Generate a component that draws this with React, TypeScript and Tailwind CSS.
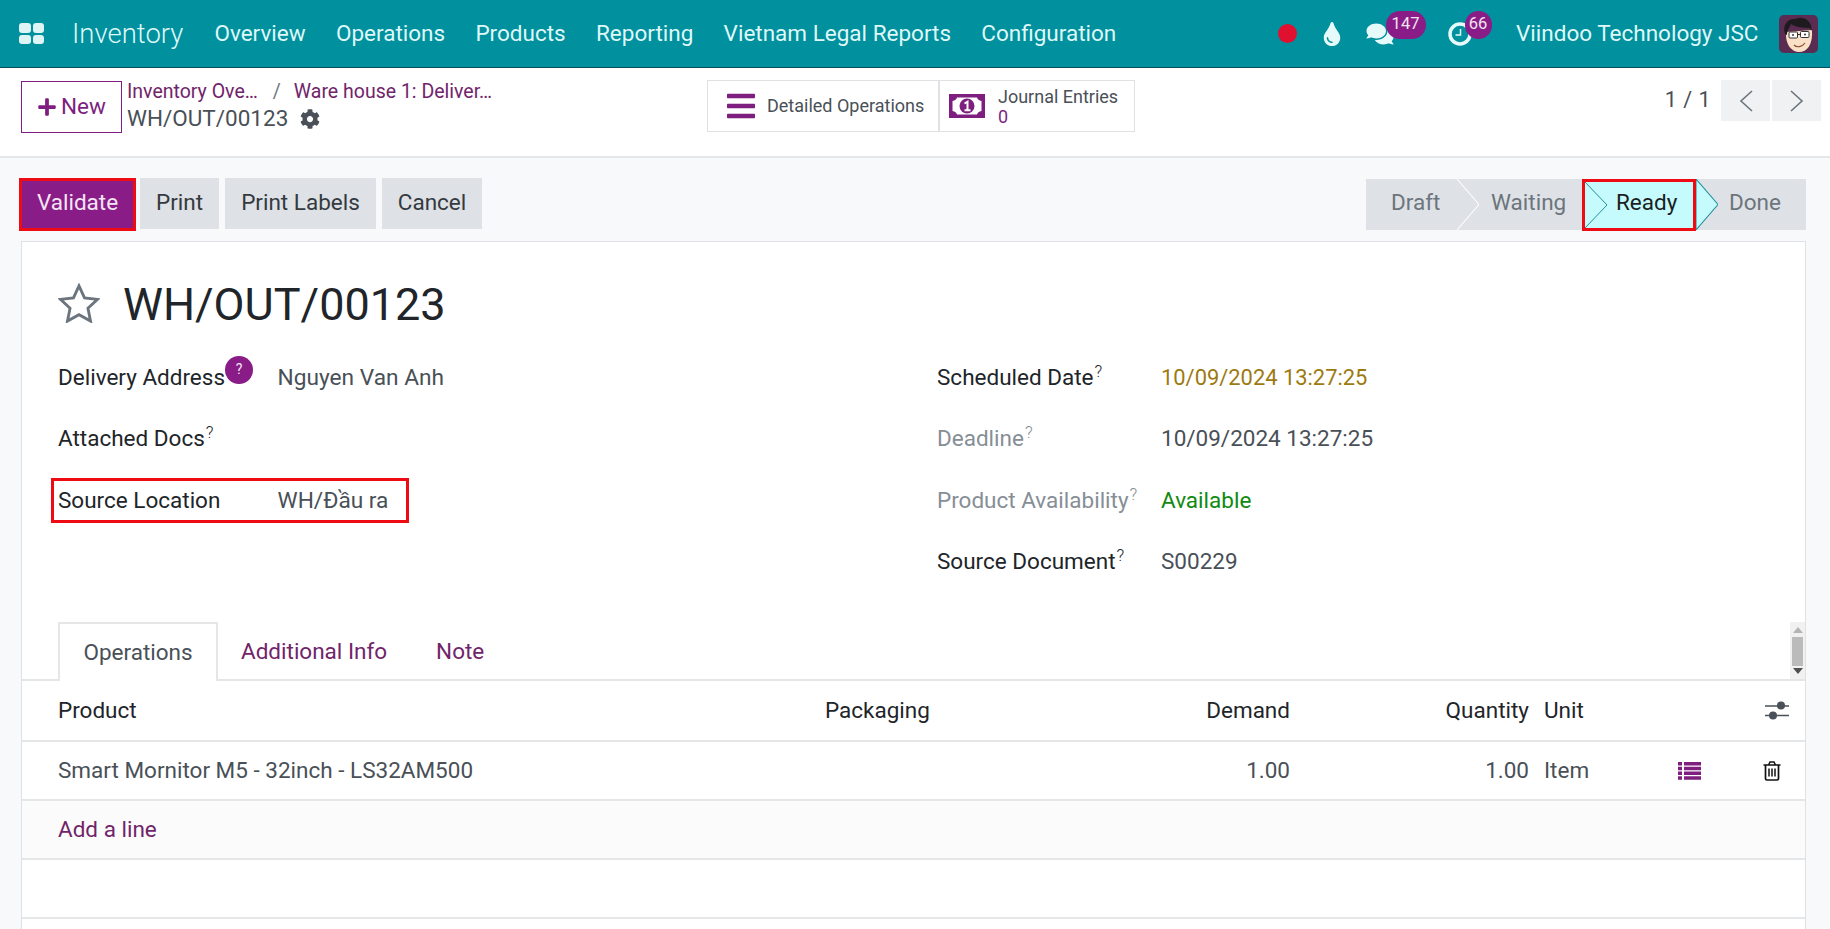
import React from "react";
import { FaBars, FaCog, FaComments, FaPlus, FaTint } from "react-icons/fa";

function Sup() {
  return <sup className="text-[17px] ml-[1px] font-light relative -top-[8px]">?</sup>;
}

function Field({ label, value, labelClass, valueClass, w, help }: { label: string; value?: string; labelClass?: string; valueClass?: string; w: string; help?: boolean }) {
  return (
    <div className="h-[61.500px] flex items-center">
      <div className={w + " " + (labelClass || "text-[#212529]")}>
        {label}
        {help && <Sup />}
      </div>
      <div className={valueClass || "text-[#495057]"}>{value}</div>
    </div>
  );
}

function Chevron({ stroke, className }: { stroke: string; className: string }) {
  return (
    <svg viewBox="0 0 22 50" preserveAspectRatio="none" className={"absolute top-0 h-full w-[22px] " + className}>
      <path d="M0 0 L22 25 L0 50" fill="none" stroke={stroke} strokeWidth="1" />
    </svg>
  );
}

function MoneyIcon() {
  return (
    <svg viewBox="0 0 36 24" className="w-[36px] h-[24px]">
      <path fillRule="evenodd" fill="#7e1f7f" d="M0 0H36V24H0Z M8 3.500 C7.500 5.500 6 6.500 3.500 7 V17 C6 17.500 7.500 18.500 8 20.500 H28 C28.500 18.500 30 17.500 32.500 17 V7 C30 6.500 28.500 5.500 28 3.500Z" />
      <circle cx="18" cy="12" r="7.500" fill="#7e1f7f" />
      <path d="M15.500 9.500 L18.500 7.800 V16 M15.500 16.300 H21.500" stroke="#fff" strokeWidth="2" fill="none" />
    </svg>
  );
}

function Sliders() {
  return (
    <svg viewBox="0 0 24 20" className="w-[24px] h-[20px]">
      <path d="M0 5H24 M0 14.500H24" stroke="#495057" strokeWidth="1.500" />
      <circle cx="16" cy="4.500" r="4" fill="#495057" />
      <circle cx="8" cy="14.500" r="4" fill="#495057" />
    </svg>
  );
}

function ListIcon() {
  return (
    <svg viewBox="0 0 23 18" className="w-[23px] h-[18px]">
      <path fill="#7e1f7f" d="M0 0H4V3.500H0Z M6 0H23V3.500H6Z M0 4.700H4V8.200H0Z M6 4.700H23V8.200H6Z M0 9.500H4V13H0Z M6 9.500H23V13H6Z M0 14.300H4V17.800H0Z M6 14.300H23V17.800H6Z" />
    </svg>
  );
}

function TrashIcon() {
  return (
    <svg viewBox="0 0 18 20" className="w-[18px] h-[20px]">
      <path d="M0.500 4H17.500 M5.500 4 L7 1H11 L12.500 4" fill="none" stroke="#111" strokeWidth="1.500" />
      <path d="M2.500 4 V17.500 C2.500 18.500 3 19 4 19 H14 C15 19 15.500 18.500 15.500 17.500 V4" fill="none" stroke="#111" strokeWidth="1.700" />
      <path d="M6 7.500V15.500 M9 7.500V15.500 M12 7.500V15.500" stroke="#111" strokeWidth="1.500" />
    </svg>
  );
}

function StarIcon() {
  return (
    <svg viewBox="0 0 44 42" className="w-[42px] h-[40px]">
      <path d="M22 3 L27.800 15.600 L41.500 17.200 L31.400 26.500 L34.100 40 L22 33.300 L9.900 40 L12.600 26.500 L2.500 17.200 L16.200 15.600 Z" fill="none" stroke="#6c757d" strokeWidth="3" />
    </svg>
  );
}

function Avatar() {
  return (
    <svg viewBox="0 0 39 38" className="w-[39px] h-[38px]">
      <rect width="39" height="38" rx="5" fill="#5a2c52" />
      <path d="M7 17 C6 30 13 37 20 37 C28 37 34 30 33 15 Z" fill="#fae0c6" />
      <path d="M6 19 C3 10 9 3 16 4 C23 1 32 3 33 16 L31 13 C24 13 16 12 12 9 C11 12 8 15 8 20Z" fill="#1d1b1e" />
      <rect x="10" y="17" width="8.500" height="6" rx="1" fill="#fff" stroke="#333" strokeWidth="1" />
      <rect x="21.500" y="16.500" width="8.500" height="6" rx="1" fill="#fff" stroke="#333" strokeWidth="1" />
      <path d="M18.500 19.500H21.500" stroke="#333" strokeWidth="1" />
      <circle cx="14" cy="20" r="1" fill="#333" />
      <circle cx="26" cy="19.500" r="1" fill="#333" />
      <path d="M15 30 C18 33 23 32 26 28" fill="none" stroke="#8a4a32" strokeWidth="1.200" />
    </svg>
  );
}

const COLS = "grid-cols-[767px_230px_235px_239px_15px_134px_24px_1fr]";

export default function App() {
  return (
    <div className="w-[1830px] h-[929px] overflow-hidden bg-[#f8f9fb] text-[22.500px] text-[#212529] font-['Roboto',sans-serif]">
      {/* top nav */}
      <div className="h-[68px] bg-[#00909e] border-b border-[#05505a] flex items-center text-[#dff8f8]">
        <div className="ml-[19px] w-[25px] h-[21px] grid grid-cols-2 gap-[2px]">
          <span className="bg-[#dff5f5] rounded-[3px]"></span>
          <span className="bg-[#dff5f5] rounded-[3px]"></span>
          <span className="bg-[#dff5f5] rounded-[3px]"></span>
          <span className="bg-[#dff5f5] rounded-[3px]"></span>
        </div>
        <div className="ml-[28px] text-[27.500px] font-light">Inventory</div>
        <div className="ml-[31px] flex gap-[30.300px]">
          <span>Overview</span>
          <span>Operations</span>
          <span>Products</span>
          <span>Reporting</span>
          <span>Vietnam Legal Reports</span>
          <span>Configuration</span>
        </div>
        <div className="ml-auto flex items-center h-full">
          <span className="w-[19px] h-[19px] rounded-full bg-[#e0102f]"></span>
          <FaTint className="ml-[26px] w-[18px] h-[24px] text-[#e6fafa]" />
          <div className="ml-[25px] relative w-[28px] h-[24px]">
            <FaComments className="w-[28px] h-[24px] text-[#e6fafa]" />
            <span className="absolute left-[20px] -top-[11px] w-[40px] h-[28px] rounded-full bg-[#8a1c87] text-[16.500px] text-[#f3e3f3] flex items-center justify-center">147</span>
          </div>
          <div className="ml-[54px] relative w-[24px] h-[24px]">
            <svg viewBox="0 0 24 24" className="w-[24px] h-[24px]">
              <circle cx="12" cy="12" r="10" fill="none" stroke="#e6fafa" strokeWidth="3.500" />
              <path d="M12.500 7V13H7.500" fill="none" stroke="#e6fafa" strokeWidth="1.500" />
            </svg>
            <span className="absolute left-[17px] -top-[11px] w-[27px] h-[28px] rounded-full bg-[#8a1c87] text-[16.500px] text-[#f3e3f3] flex items-center justify-center">66</span>
          </div>
          <span className="ml-[44.500px]">Viindoo Technology JSC</span>
          <div className="ml-[20.500px] mr-[12px]">
            <Avatar />
          </div>
        </div>
      </div>

      {/* control panel */}
      <div className="h-[90px] bg-white border-b-2 border-[#e4e6e8] flex items-start pt-[12px]">
        <div className="ml-[21px] mt-[1px] w-[101px] h-[52px] border border-[#7e1f7f] flex items-center justify-center gap-[4px] text-[#7e1f7f]">
          <FaPlus className="w-[20px] h-[20px]" />
          <span>New</span>
        </div>
        <div className="ml-[5px] w-[571px] leading-[27px] -mt-[2px]">
          <div className="text-[#71246a] text-[19.500px] flex">
            <span>Inventory Ove…</span>
            <span className="ml-[15px] text-[#6c757d]">/</span>
            <span className="ml-[13px]">Ware house 1: Deliver…</span>
          </div>
          <div className="flex items-center text-[#495057]">
            WH/OUT/00123
            <FaCog className="ml-[12px] w-[20px] h-[20px]" />
          </div>
        </div>
        <div className="ml-[9px] h-[52px] w-[428px] border border-[#dfe1e4] flex">
          <div className="w-[232px] flex items-center border-r-2 border-[#dfe1e4] text-[#495057] text-[18px]">
            <FaBars className="ml-[17px] w-[32px] h-[32px] text-[#7e1f7f]" />
            <span className="ml-[10px] -mt-[1px]">Detailed Operations</span>
          </div>
          <div className="flex items-center text-[18px] text-[#495057]">
            <div className="ml-[9px] flex">
              <MoneyIcon />
            </div>
            <div className="ml-[13px] leading-[20px] mt-[2px]">
              <div>Journal Entries</div>
              <div className="text-[#7e1f7f]">0</div>
            </div>
          </div>
        </div>
        <div className="ml-auto flex items-center mr-[9px]">
          <span className="text-[#495057] text-[21.500px] tracking-[0.500px]">1 / 1</span>
          <div className="ml-[10px] w-[49px] h-[41px] bg-[#f0f1f2] flex items-center justify-center">
            <svg viewBox="0 0 14 22" className="w-[14px] h-[22px]">
              <path d="M13 1 L2 11 L13 21" fill="none" stroke="#6c757d" strokeWidth="1.600" />
            </svg>
          </div>
          <div className="ml-[2px] w-[49px] h-[41px] bg-[#f0f1f2] flex items-center justify-center">
            <svg viewBox="0 0 14 22" className="w-[14px] h-[22px]">
              <path d="M1 1 L12 11 L1 21" fill="none" stroke="#6c757d" strokeWidth="1.600" />
            </svg>
          </div>
        </div>
      </div>

      {/* action buttons + status bar */}
      <div className="h-[83px] flex items-start pt-[20px]">
        <div className="ml-[19px] w-[117px] h-[53px] pb-[4px] border-[3px] border-[#ee0b13] bg-[#8a1c87] text-[#f4e6f4] flex items-center justify-center">Validate</div>
        <div className="ml-[4px] w-[79px] h-[51px] pb-[2px] bg-[#dee1e5] text-[#343a40] flex items-center justify-center">Print</div>
        <div className="ml-[6px] w-[151px] h-[51px] pb-[2px] bg-[#dee1e5] text-[#343a40] flex items-center justify-center">Print Labels</div>
        <div className="ml-[6px] w-[100px] h-[51px] pb-[2px] bg-[#dee1e5] text-[#343a40] flex items-center justify-center">Cancel</div>
        <div className="ml-auto mr-[24px] h-[51px] w-[440px] bg-[#dee1e5] flex text-[#6c757d] mt-[1px]">
          <div className="w-[91px] relative pl-[25px] pb-[3px] flex items-center">
            Draft
            <Chevron stroke="#ffffff" className="left-[91px] z-10" />
          </div>
          <div className="w-[125px] relative pl-[34px] pb-[3px] flex items-center">Waiting</div>
          <div className="w-[114px] relative h-[52px] pl-[31px] pb-[5px] flex items-center bg-[#c5fbfd] text-[#1b1f23] border-[3px] border-[#ee0b13]">
            Ready
            <Chevron stroke="#1b8a96" className="left-0 z-10" />
          </div>
          <div className="relative flex-1 pl-[33px] pb-[3px] flex items-center">
            <svg viewBox="0 0 22 50" preserveAspectRatio="none" className="absolute left-0 top-0 h-full w-[22px]">
              <path d="M0 0 L22 25 L0 50Z" fill="#c5fbfd" stroke="#1b8a96" strokeWidth="1" />
            </svg>
            Done
          </div>
        </div>
      </div>

      {/* sheet */}
      <div className="ml-[21px] w-[1785px] h-[700px] bg-white border border-[#dfe1e6]">
        <div className="h-[105px] pl-[36px] flex items-start pt-[33px]">
          <div className="mt-[8px] flex">
            <StarIcon />
          </div>
          <h1 className="ml-[23px] text-[45px] leading-[60px] text-[#212529] font-normal">WH/OUT/00123</h1>
        </div>
        <div className="pl-[36px] flex">
          <div className="w-[879px]">
            <div className="h-[61.500px] flex items-center">
              <div className="w-[219.500px] relative">
                Delivery Address
                <span className="absolute left-[167px] -top-[5px] w-[28px] h-[28px] rounded-full bg-[#8a1c87] text-[#f4e6f4] text-[14px] flex items-center justify-center">?</span>
              </div>
              <div className="text-[#495057] text-[22.700px]">Nguyen Van Anh</div>
            </div>
            <Field label="Attached Docs" w="w-[219.500px]" help />
            <div className="h-[61.500px] flex items-center -ml-[7px]">
              <div className="w-[358px] h-[45px] border-[3px] border-[#ee0b13] flex items-center pl-[4px]">
                <div className="w-[219.500px]">Source Location</div>
                <div className="text-[#495057] text-[22.700px]">WH/Đầu ra</div>
              </div>
            </div>
          </div>
          <div>
            <Field label="Scheduled Date" value="10/09/2024 13:27:25" w="w-[224px]" help valueClass="text-[#9c7a10] text-[21.900px] mt-[1px]" />
            <Field label="Deadline" value="10/09/2024 13:27:25" w="w-[224px]" help labelClass="text-[#868e96]" />
            <Field label="Product Availability" value="Available" w="w-[224px]" help labelClass="text-[#868e96]" valueClass="text-[#108a10]" />
            <Field label="Source Document" value="S00229" w="w-[224px]" help />
          </div>
        </div>

        {/* tabs */}
        <div className="mt-[29px] h-[59px] border-b-2 border-[#e4e6e8] pl-[36px] flex relative">
          <div className="w-[160px] h-[59px] bg-white border-2 border-b-0 border-[#e4e6e8] flex items-center justify-center text-[#495057]">Operations</div>
          <div className="ml-[23px] pt-[2px] flex items-center text-[#71246a]">Additional Info</div>
          <div className="ml-[49px] pt-[2px] flex items-center text-[#71246a]">Note</div>
          <div className="absolute right-0 top-0 w-[15px] h-[57px] bg-[#f1f1f1] flex flex-col items-center justify-between py-[5px]">
            <span className="w-0 h-0 border-x-[5px] border-x-transparent border-b-[6px] border-b-[#b4b4b4]"></span>
            <span className="absolute top-[15px] left-[2px] w-[11px] h-[29px] bg-[#bbbbbb]"></span>
            <span className="w-0 h-0 border-x-[5px] border-x-transparent border-t-[6px] border-t-[#505050]"></span>
          </div>
        </div>

        {/* table */}
        <div className={"h-[61px] border-b-2 border-[#e4e6e8] pl-[36px] grid items-center " + COLS}>
          <span>Product</span>
          <span>Packaging</span>
          <span className="text-right">Demand</span>
          <span className="text-right">Quantity</span>
          <span></span>
          <span>Unit</span>
          <span></span>
          <div className="justify-self-end mr-[16px] flex">
            <Sliders />
          </div>
        </div>
        <div className={"h-[59px] border-b-2 border-[#e4e6e8] pl-[36px] grid items-center text-[#495057] " + COLS}>
          <span>Smart Mornitor M5 - 32inch - LS32AM500</span>
          <span></span>
          <span className="text-right">1.00</span>
          <span className="text-right">1.00</span>
          <span></span>
          <span>Item</span>
          <div className="flex">
            <ListIcon />
          </div>
          <div className="justify-self-end mr-[24px] flex">
            <TrashIcon />
          </div>
        </div>
        <div className="h-[59px] bg-[#fbfbfb] border-b-2 border-[#e4e6e8] pl-[36px] flex items-center text-[#71246a]">Add a line</div>
        <div className="h-[59px] border-b-2 border-[#e4e6e8]"></div>
      </div>
    </div>
  );
}
